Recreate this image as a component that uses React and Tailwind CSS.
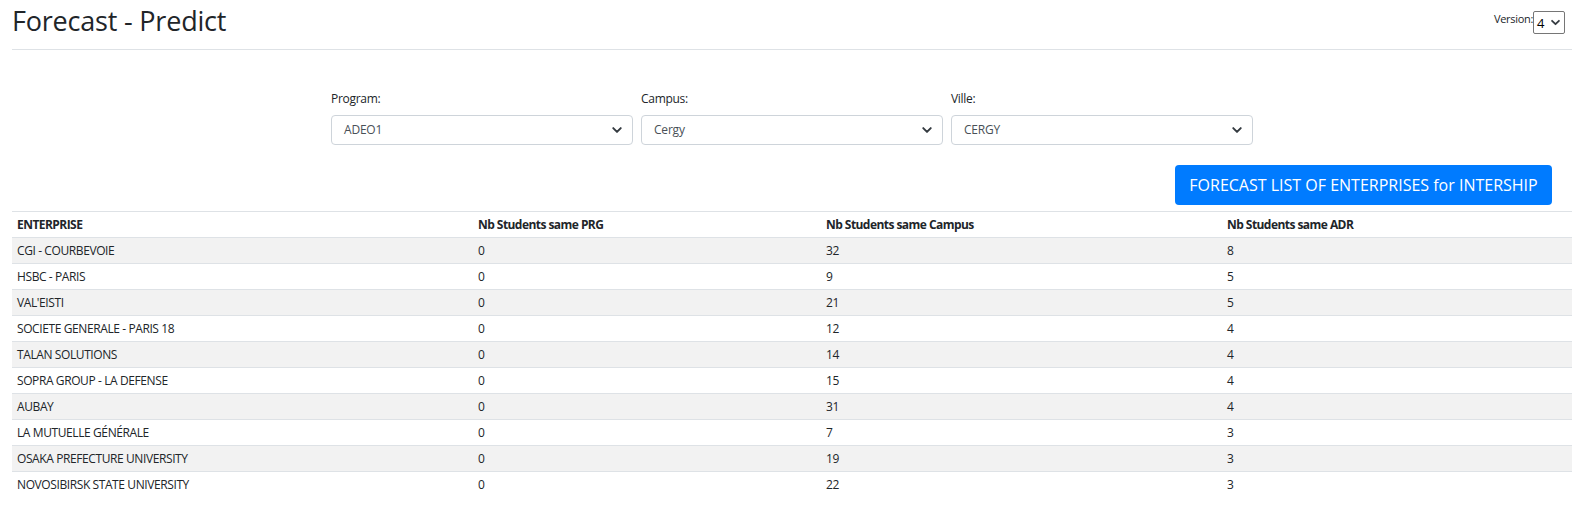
import React from 'react';

const rows = [
    ['CGI - COURBEVOIE', 0, 32, 8],
    ['HSBC - PARIS', 0, 9, 5],
    ["VAL'EISTI", 0, 21, 5],
    ['SOCIETE GENERALE - PARIS 18', 0, 12, 4],
    ['TALAN SOLUTIONS', 0, 14, 4],
    ['SOPRA GROUP - LA DEFENSE', 0, 15, 4],
    ['AUBAY', 0, 31, 4],
    ['LA MUTUELLE GÉNÉRALE', 0, 7, 3],
    ['OSAKA PREFECTURE UNIVERSITY', 0, 19, 3],
    ['NOVOSIBIRSK STATE UNIVERSITY', 0, 22, 3],
];

const Chevron = ({ className = '' }) => (
    <svg viewBox="0 0 16 16" className={className} fill="none" stroke="#343a40" strokeWidth="2.6" strokeLinecap="round" strokeLinejoin="round">
        <path d="M3 5.5l5 5 5-5" />
    </svg>
);

const Filter = ({ label, value }) => (
    <div className="flex flex-col w-[302px]">
        <label className="text-[12px] leading-[16px] text-[#212529] mb-[8px] tracking-[-0.3px]">{label}</label>
        <div className="h-[30px] border border-[#ced4da] rounded-[4px] bg-white flex items-center justify-between pl-[12px] pr-[9px]">
            <span className="text-[12px] text-[#495057] tracking-[-0.2px]">{value}</span>
            <Chevron className="w-[12px] h-[12px]" />
        </div>
    </div>
);

const App = () => {
    return (
        <div className="min-h-screen bg-white pl-[12px] pr-[9px] text-[#212529]" style={{ fontFamily: '"Segoe UI", "Open Sans", "Noto Sans", sans-serif' }}>
            <div className="flex justify-between items-start border-b border-[#dee2e6] h-[50px]">
                <h1 className="text-[27px] leading-[34px] font-medium mt-[4px] tracking-[-0.2px]">Forecast - Predict</h1>
                <div className="flex items-start mt-[11px] mr-[7px]">
                    <span className="text-[11px] leading-[14px] text-[#212529] mt-[1px] tracking-[-0.3px]">Version:</span>
                    <div className="w-[32px] h-[23px] border border-[#767676] rounded-[2px] flex items-center justify-between px-[3px]">
                        <span className="text-[13px] text-black leading-none mt-[2px]">4</span>
                        <Chevron className="w-[11px] h-[11px]" />
                    </div>
                </div>
            </div>

            <div className="flex gap-[8px] pl-[319px] pt-[41px]">
                <Filter label="Program:" value="ADEO1" />
                <Filter label="Campus:" value="Cergy" />
                <Filter label="Ville:" value="CERGY" />
            </div>

            <div className="flex justify-end pr-[20px] pt-[20px] pb-[6px]">
                <button className="h-[40px] w-[377px] bg-[#007bff] text-white text-[16px] rounded-[4px]">
                    FORECAST LIST OF ENTERPRISES for INTERSHIP
                </button>
            </div>

            <table className="w-full table-fixed border-collapse text-[12px] tracking-[-0.4px]">
                <colgroup>
                    <col className="w-[461px]" />
                    <col className="w-[348px]" />
                    <col className="w-[401px]" />
                    <col className="w-[350px]" />
                </colgroup>
                <thead>
                    <tr className="h-[26px] border-t border-[#dee2e6]">
                        <th className="text-left font-bold px-[5px] tracking-[-0.55px]">ENTERPRISE</th>
                        <th className="text-left font-bold px-[5px] tracking-[-0.55px]">Nb Students same PRG</th>
                        <th className="text-left font-bold px-[5px] tracking-[-0.55px]">Nb Students same Campus</th>
                        <th className="text-left font-bold px-[5px] tracking-[-0.55px]">Nb Students same ADR</th>
                    </tr>
                </thead>
                <tbody>
                    {rows.map((r, i) => (
                        <tr key={r[0]} className={`h-[26px] border-t border-[#dee2e6] ${i % 2 === 0 ? 'bg-[#f2f2f2]' : 'bg-white'}`}>
                            {r.map((c, j) => (
                                <td key={j} className="px-[5px]">{c}</td>
                            ))}
                        </tr>
                    ))}
                </tbody>
            </table>
        </div>
    );
};

export default App;
